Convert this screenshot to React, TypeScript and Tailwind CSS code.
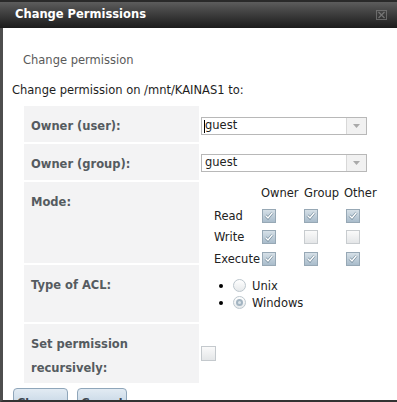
const Check = ({ checked }: { checked: boolean }) => {
  if (!checked) {
    return <div className="w-[14px] h-[14px] border border-[#c8cccf] bg-linear-to-b from-[#fafafa] to-[#e4e6e8]" />
  }
  return (
    <div className="w-[14px] h-[14px] border border-[#97a8b5] bg-linear-to-b from-[#d6e0e7] to-[#a9bccb] flex items-center justify-center">
      <svg width="10" height="9" viewBox="0 0 10 9">
        <path d="M1.5 4.5 L4 7 L8.5 1.5" fill="none" stroke="#6f8798" strokeWidth="2.6" />
        <path d="M1.5 4.5 L4 7 L8.5 1.5" fill="none" stroke="#ffffff" strokeWidth="1.4" />
      </svg>
    </div>
  )
}

const Radio = ({ checked }: { checked: boolean }) => (
  <div className="w-[13px] h-[13px] rounded-full border border-[#bcc6cd] bg-linear-to-b from-white to-[#e6e9eb] flex items-center justify-center">
    {checked && <div className="w-[7px] h-[7px] rounded-full border-2 border-[#a3b4c1] bg-[#d9e2e8]" />}
  </div>
)

const Select = ({ value, caret }: { value: string; caret?: boolean }) => (
  <div className="ml-[2px] w-[166px] h-[18px] border border-[#b8b8b8] bg-white flex">
    <div className="flex-1 flex items-center pl-[2px] text-[#222]">
      {caret && <span className="w-px h-[13px] bg-black" />}
      <span className={caret ? "" : "pl-[1px]"}>{value}</span>
    </div>
    <div className="w-[20px] border-l border-[#d8d8d8] bg-[#f1f1f1] flex items-center justify-center">
      <svg width="7" height="4" viewBox="0 0 7 4">
        <path d="M0 0 L7 0 L3.5 4 Z" fill="#a9a9a9" />
      </svg>
    </div>
  </div>
)

const Label = ({ children }: { children: React.ReactNode }) => (
  <div className="bg-[#f3f3f4] pl-[7px] pt-2 leading-6 font-bold text-[#555b60]">{children}</div>
)

const modeRows = [
  { name: "Read", values: [true, true, true] },
  { name: "Write", values: [true, false, false] },
  { name: "Execute", values: [true, true, true] },
]

export default function App() {
  return (
    <div className="w-[397px] h-[402px] overflow-hidden flex flex-col font-['DejaVu_Sans',Verdana,sans-serif] text-[11.5px]">
      {/* title bar */}
      <div className="h-[28px] shrink-0 border-t-2 border-[#2a2a2a] bg-linear-to-b from-[#5d5d5d] to-[#1c1c1c] flex items-center justify-between pl-[15px] pr-[10px]">
        <span className="text-white font-bold text-[11.5px] leading-none pb-[1px]">Change Permissions</span>
        <svg width="11" height="10" viewBox="0 0 11 10" className="opacity-60">
          <rect x="0.5" y="0.5" width="10" height="9" fill="none" stroke="#8a8a8a" />
          <path d="M2.5 2 L8.5 8 M8.5 2 L2.5 8" stroke="#9a9a9a" strokeWidth="1.3" />
        </svg>
      </div>

      {/* body */}
      <div className="h-[374px] overflow-hidden bg-white border-l-[3px] border-[#4e4e4e] border-b-2 border-b-[#333]">
        <div className="pt-[25px] pl-[20px] leading-[14px] text-[#5a5a5a]">Change permission</div>
        <div className="mt-[16px] pl-[9px] leading-[14px] text-[#1e1e1e]">Change permission on /mnt/KAINAS1 to:</div>

        <div className="mt-[9px] ml-[21px] grid grid-cols-[175px_1fr] gap-y-[2px]">
          <Label>Owner (user):</Label>
          <div className="h-[36px] pt-[11px]">
            <Select value="guest" caret />
          </div>

          <Label>Owner (group):</Label>
          <div className="h-[36px] pt-[10px]">
            <Select value="guest" />
          </div>

          <Label>Mode:</Label>
          <div className="h-[81px] pt-[3px] pl-[15px] text-[#222]">
            <div className="grid grid-cols-[48px_42px_40px_auto] items-center gap-y-[7.5px]">
              <div />
              <div className="leading-4 -ml-px">Owner</div>
              <div className="leading-4">Group</div>
              <div className="leading-4">Other</div>
              {modeRows.map((row) => (
                <div key={row.name} className="contents">
                  <div className="leading-[14px]">{row.name}</div>
                  {row.values.map((v, i) => (
                    <div key={i} className={i === 2 ? "ml-[2px]" : ""}>
                      <Check checked={v} />
                    </div>
                  ))}
                </div>
              ))}
            </div>
          </div>

          <Label>Type of ACL:</Label>
          <div className="h-[57px] pt-[14px] text-[#222] flex flex-col gap-[4px]">
            {[
              { name: "Unix", on: false },
              { name: "Windows", on: true },
            ].map((r) => (
              <div key={r.name} className="flex items-center h-[13px]">
                <span className="ml-[20px] w-[4px] h-[4px] rounded-full bg-black" />
                <span className="ml-[10px]">
                  <Radio checked={r.on} />
                </span>
                <span className="ml-[6px] leading-[14px]">{r.name}</span>
              </div>
            ))}
          </div>

          <Label>
            Set permission
            <br />
            recursively:
          </Label>
          <div className="h-[59px] pt-[22px] pl-[2px]">
            <div className="w-[15px] h-[15px] border border-[#c4c9cd] bg-linear-to-b from-[#fafafa] to-[#e4e6e8]" />
          </div>
        </div>

        <div className="mt-[5px] ml-[10px] flex gap-[9px]">
          <button className="w-[55px] h-[24px] rounded-t-[4px] border border-[#8fa6ba] bg-linear-to-b from-[#e2ebf3] to-[#bccfe0] pt-[6px] font-bold text-[#3c4650] text-[11px]">
            Change
          </button>
          <button className="w-[50px] h-[24px] rounded-t-[4px] border border-[#8fa6ba] bg-linear-to-b from-[#e2ebf3] to-[#bccfe0] pt-[6px] font-bold text-[#3c4650] text-[11px]">
            Cancel
          </button>
        </div>
      </div>
    </div>
  )
}
